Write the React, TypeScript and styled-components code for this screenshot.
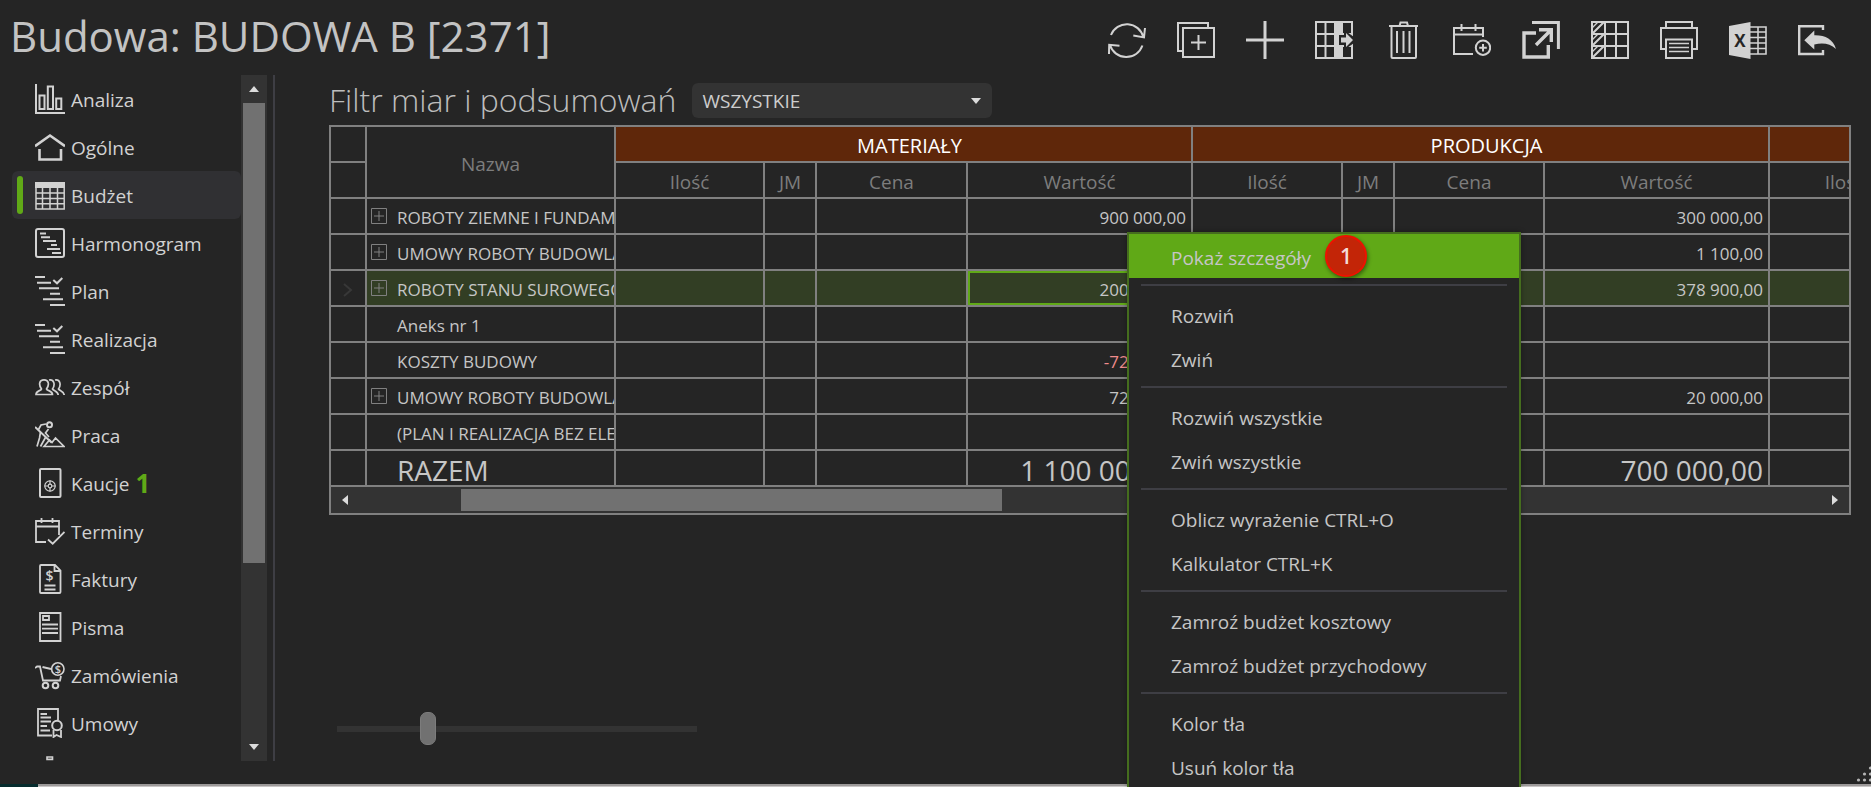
import React from "react";
import styled, { createGlobalStyle } from "styled-components";

const font = `"Open Sans", "Noto Sans", sans-serif`;
const c = {
  bg: "#252525",
  panel: "#333333",
  thumb: "#717171",
  line: "#808080",
  muted: "#7d7d7d",
  text: "#cdcdcd",
  divider: "#3e3e44",
  green: "#60a917",
  rowGreen: "#323e24",
  brown: "#5f270a",
};

const GlobalStyle = createGlobalStyle`
  *, *::before, *::after { box-sizing: border-box; }
  body { margin: 0; background: ${c.bg}; font-family: ${font}; color: ${c.text}; overflow: hidden; }
  button, select, input { font: inherit; color: inherit; margin: 0; }
  button { background: none; border: 0; padding: 0; cursor: pointer; }
`;

const Window = styled.div`
  position: relative;
  display: flex;
  flex-direction: column;
  height: 100vh;
  overflow: hidden;
  background: ${c.bg};
`;

const Header = styled.header`
  display: flex;
  justify-content: space-between;
  align-items: flex-start;
  height: 75px;
  flex: none;
  padding: 0 35px 0 10px;
`;

const Title = styled.h1`
  margin: 0;
  padding-top: 5px;
  font-size: 42px;
  line-height: 62px;
  font-weight: 400;
  color: #c3c3c3;
  white-space: nowrap;
`;

const Toolbar = styled.div`
  display: flex;
  gap: 31px;
  padding-top: 21px;
`;

const ToolButton = styled.button`
  display: block;
  width: 38px;
  height: 38px;
`;

const Icon = styled.svg<{ $size: number }>`
  display: block;
  flex: none;
  width: ${(p) => p.$size}px;
  height: ${(p) => p.$size}px;
  fill: none;
  stroke: #d2d2d2;
  stroke-width: 2;
  .solid { fill: #d2d2d2; stroke: none; }
  .halo { fill: ${c.bg}; stroke: none; }
  .thick { stroke-width: 3; }
  text { stroke: none; fill: #d2d2d2; font-family: ${font}; font-weight: 600; text-anchor: middle; }
  text.dark { fill: ${c.bg}; font-weight: 700; }
`;

const Body = styled.div`
  display: flex;
  flex: 1;
  min-height: 0;
`;

const Sidebar = styled.aside`
  display: flex;
  width: 275px;
  flex: none;
  margin-bottom: 23px;
  padding-left: 12px;
  border-right: 2px solid ${c.divider};
`;

const NavList = styled.nav`
  flex: 1;
  overflow: hidden;
`;

const NavItem = styled.a<{ $active?: boolean }>`
  display: flex;
  align-items: center;
  gap: 6px;
  height: 48px;
  padding-left: ${(p) => (p.$active ? 5 : 23)}px;
  border-radius: 6px;
  background: ${(p) => (p.$active ? "#303033" : "transparent")};
  font-size: 19px;
  line-height: 26px;
  color: #d2d2d2;
  text-decoration: none;
`;

const NavLabel = styled.span`
  padding-top: 2px;
`;

const ActiveMark = styled.span`
  width: 6px;
  height: 38px;
  margin-right: 6px;
  border-radius: 3px;
  background: ${c.green};
`;

const Count = styled.b`
  font-size: 26px;
  line-height: 30px;
  font-weight: 700;
  color: ${c.green};
`;

const VScroll = styled.div`
  display: flex;
  flex-direction: column;
  width: 26px;
  margin-right: 6px;
  padding: 0 2px;
  background: ${c.panel};
`;

const ArrowButton = styled.button`
  display: flex;
  align-items: center;
  justify-content: center;
  width: 28px;
  height: 28px;
  flex: none;
`;

const VArrowButton = styled(ArrowButton)`
  width: 22px;
`;

const VTrack = styled.div`
  flex: 1;
`;

const VThumb = styled.div`
  height: 73%;
  background: ${c.thumb};
`;

const Arrow = styled.svg`
  display: block;
  fill: #dcdcdc;
`;

const Main = styled.main`
  position: relative;
  display: flex;
  flex-direction: column;
  flex: 1;
  min-width: 0;
  padding: 0 20px 0 54px;
`;

const FilterRow = styled.div`
  display: flex;
  align-items: center;
  gap: 16px;
  height: 50px;
  flex: none;
`;

const FilterLabel = styled.label`
  font-size: 32px;
  line-height: 44px;
  font-weight: 300;
  color: #bdbdbd;
  white-space: nowrap;
`;

const SelectBox = styled.div`
  position: relative;
  width: 300px;
  height: 35px;
`;

const Select = styled.select`
  appearance: none;
  width: 100%;
  height: 100%;
  padding: 1px 30px 0 10px;
  border: 0;
  border-radius: 6px;
  background: ${c.panel};
  font-size: 19px;
`;

const SelectArrow = styled(Arrow)`
  position: absolute;
  right: 11px;
  top: 15px;
  pointer-events: none;
`;

const GridFrame = styled.div`
  flex: none;
  border: 2px solid ${c.line};
`;

const GridViewport = styled.div`
  overflow: hidden;
`;

const Table = styled.table`
  table-layout: fixed;
  width: 1590px;
  border-collapse: separate;
  border-spacing: 0;
`;

const Th = styled.th<{ $group?: boolean }>`
  height: 36px;
  padding: ${(p) => (p.$group ? "4px 0 0 12px" : "4px 0 0")};
  border: solid ${c.line};
  border-width: 0 2px 2px 0;
  background: ${(p) => (p.$group ? c.brown : "transparent")};
  font-size: ${(p) => (p.$group ? 20 : 19)}px;
  line-height: 28px;
  font-weight: 400;
  color: ${(p) => (p.$group ? "#ffffff" : c.muted)};
`;

const Tr = styled.tr<{ $selected?: boolean }>`
  td + td { background: ${(p) => (p.$selected ? c.rowGreen : "transparent")}; }
`;

const Td = styled.td<{ $focus?: boolean; $negative?: boolean; $total?: boolean }>`
  height: 36px;
  padding: 4px 5px 0;
  border: solid ${c.line};
  border-width: 0 2px 2px 0;
  overflow: hidden;
  white-space: nowrap;
  text-align: right;
  font-size: ${(p) => (p.$total ? 28 : 17)}px;
  line-height: 30px;
  color: ${(p) => (p.$negative ? "#f08c8c" : "#c6c6c6")};
  box-shadow: ${(p) => (p.$focus ? `inset 0 0 0 2px ${c.green}` : "none")};
`;

const NameCell = styled(Td)`
  padding: 4px 0 0 4px;
  text-align: left;
`;

const NameInner = styled.div<{ $leaf?: boolean }>`
  display: flex;
  align-items: center;
  gap: 10px;
  padding-left: ${(p) => (p.$leaf ? 26 : 0)}px;
`;

const ExpandButton = styled.button`
  width: 16px;
  height: 20px;
  flex: none;
  svg { display: block; margin-bottom: 4px; }
`;

const Marker = styled.svg`
  display: block;
  margin: 0 auto;
  fill: none;
  stroke: #383838;
  stroke-width: 2;
`;

const HScroll = styled.div`
  display: flex;
  align-items: center;
  height: 26px;
  background: ${c.panel};
`;

const HTrack = styled.div`
  flex: 1;
  height: 22px;
`;

const HThumb = styled.div`
  width: 37%;
  height: 22px;
  margin-left: 7%;
  background: ${c.thumb};
`;

const ZoomSlider = styled.input`
  appearance: none;
  width: 360px;
  height: 33px;
  margin: auto 0 39px 8px;
  background: linear-gradient(${c.panel}, ${c.panel}) center / 100% 6px no-repeat;
  &::-webkit-slider-thumb {
    appearance: none;
    width: 16px;
    height: 33px;
    border: 1px solid #7c7c7c;
    border-radius: 7px;
    background: ${c.thumb};
  }
`;

const Menu = styled.div`
  position: absolute;
  left: 1127px;
  top: 232px;
  bottom: 0;
  width: 394px;
  overflow: hidden;
  border: 2px solid #456d1e;
  border-bottom: 0;
  background: ${c.bg};
  box-shadow: 0 0 5px rgba(0, 0, 0, 0.35);
`;

const MenuItem = styled.button<{ $active?: boolean }>`
  display: flex;
  align-items: center;
  gap: 14px;
  width: 100%;
  height: 44px;
  padding: 3px 0 0 42px;
  background: ${(p) => (p.$active ? c.green : "transparent")};
  font-size: 19px;
  line-height: 26px;
  color: #c6c6c6;
  white-space: nowrap;
`;

const MenuLine = styled.hr`
  height: 2px;
  margin: 6px 12px;
  border: 0;
  background: ${c.divider};
`;

const Step = styled.span`
  display: flex;
  align-items: center;
  justify-content: center;
  width: 42px;
  height: 42px;
  margin-bottom: 3px;
  border: 2px solid #ee1200;
  border-radius: 50%;
  background: #c32507;
  box-shadow: 1px 2px 4px rgba(0, 0, 0, 0.45);
  font-size: 21px;
  line-height: 24px;
  font-weight: 600;
  color: #f3dcd8;
`;

const BottomEdge = styled.footer`
  flex: none;
  height: 3px;
  border-left: 38px solid #062b2d;
  background: linear-gradient(#9c9999 0 2px, #c9c6c6 2px);
`;

const Grip = styled.svg`
  position: absolute;
  right: 0;
  bottom: 0;
  fill: #b4b4b4;
`;

const toolIcons: [string, React.ReactNode][] = [
  ["Odśwież", <><path d="M3 14A17 17 0 0 1 35.300 16M25.300 14.500 36 16.400 37 7M34.400 24.500A17 17 0 0 1 2 24M11.500 24.800 1.200 23.800 1 33" /></>],
  ["Dodaj kopię", <><path d="M6 30H1V2H31V7M21.500 14V29M14 21.500H29" /><path d="M6 7H37V36H6Z" /></>],
  ["Dodaj", <path className="thick" d="M19 0V38M0 19H38" />],
  ["Kolumny", <><path d="M1 1H37V37H1ZM10.500 1V37M1 13H20M1 25H20" /><path className="solid" d="M19 1H28V37H19Z" /><path d="M28 13H37M28 25H37" /><path className="halo" d="M24 14H29V9L39 16V22L29 29V24H24Z" /><path className="solid" d="M26 16.500H31V12L38 19 31 26V21.500H26Z" /></>],
  ["Usuń", <><path d="M5 5H34M15.500 5 16.500 1.500H23L24 5M7.500 5V36Q7.500 37 8.500 37H31Q32 37 32 36V5M13 10V32M19.500 10V32M25.500 10V32" /></>],
  ["Dodaj termin", <><path d="M20 33H1V7H30V16M1 13.500H30M8.500 3V10M22.500 3V10" /><circle cx="30" cy="26.700" r="7.200" /><path d="M30 23V30.500M26.200 26.700H33.800" /></>],
  ["Otwórz", <><path strokeWidth="3" d="M10 1.600H36.400V28" /><path strokeWidth="3.400" d="M14 12H2V36H26.300V24M17 8.700H29.300V21M14 24 29 9" /></>],
  ["Siatka", <><path d="M1 1H37V37H1ZM14 1V37M25 1V37M1 13H37M1 25H37" /><path d="M2 12 13 1M2 24 13 13M2 36 13 25" /><path strokeWidth="1.400" d="M1 7 7 1M1 19 7 13M1 31 7 25" /></>],
  ["Drukuj", <><path d="M6 6V1H32V6M5 28H1V7H37V28H33M6 18.500H32V37H6Z" /><path strokeWidth="1.400" d="M9 22.500H29M9 26.500H29M9 30.500H29" /></>],
  ["Eksport do Excela", <><path className="solid" d="M0 5 21.500 1V38L0 34Z" /><path strokeWidth="1.600" d="M21 6H37V33H21M29 6V33M21 11H37M21 16.500H37M21 22H37M21 27.500H37" /><text className="dark" x="11" y="25.500" fontSize="17">X</text></>],
  ["Powrót", <><path strokeWidth="2.400" d="M25 9V5.200H1.200V33H25V29" /><path className="solid" d="M6.300 19.300 16.300 9.500V14.300C27 14 35 18 38 28 32 22.500 25 21.500 16.300 23.500V28.500Z" /></>],
];

const planIcon = <path d="M0 1H10M2 6.700H16M4 12.300H24M15 17.700H25M8 23.300H28M15 29H30M18.300 4 22 7.300 27.300 2" />;

const navItems: { label: string; icon: React.ReactNode; active?: boolean; count?: number }[] = [
  { label: "Analiza", icon: <path d="M1 0V29H30M4.500 11.500H9.500V25H4.500ZM12.800 2.500H18V25H12.800ZM21.200 14.500H26.300V25H21.200Z" /> },
  { label: "Ogólne", icon: <><path strokeWidth="2.600" d="M0 14.200 15 3.500 30 14.200" /><path strokeWidth="2.600" d="M4.500 17V27.500H26V17" /></> },
  { label: "Budżet", active: true, icon: <><path strokeWidth="1.500" d="M1 2.700H29.200V29H1ZM7.500 8V29M15 8V29M22.500 8V29M1 13H29M1 18.500H29M1 23.700H29" /><path className="solid" d="M0 2H30V8H0Z" /></> },
  { label: "Harmonogram", icon: <><rect x="1" y="1" width="28" height="28" rx="2" /><path d="M5 5.500H11M6 9.300H15M8 13H21M16 17H22M12 21H25M17 25H26" /></> },
  { label: "Plan", icon: planIcon },
  { label: "Realizacja", icon: planIcon },
  { label: "Zespół", icon: <path strokeWidth="1.700" d="M1 22.500C1 18.500 6 19 6.500 17 3.500 13 4 7.800 9 7.800S14.500 13 11.500 17C12 19 17.500 18.500 17.500 22.500ZM14 8C19 7 20.500 12.500 17.500 17 18.500 19 23 19 23.200 23M20 8C25 7 26.500 12.500 23.500 17 24.500 19 29 19 29.200 23" /> },
  { label: "Praca", icon: <><circle cx="14.500" cy="4.800" r="2.500" /><path d="M0 7 16.500 22.500" /><path strokeWidth="1.700" d="M3.500 9.500 6 5 11 4M13.500 9 10.500 13 14 17M5.500 12 4.500 18 2 26.500M10.500 17.500 8.500 21 5.500 26.500M9 26.500 14.500 20 17 22.500 20.500 18 29 26.500Z" /></> },
  { label: "Kaucje", count: 1, icon: <><rect x="5" y="1" width="20.500" height="28" rx="1" /><circle cx="15" cy="18" r="5.200" strokeWidth="1.200" /><circle cx="15" cy="18" r="1.800" strokeWidth="1.200" /><path strokeWidth="1.200" d="M9.500 18H13M17 18H20.500M15 12.500V16M15 20V23.500" /></> },
  { label: "Terminy", icon: <path strokeWidth="1.800" d="M11 26H1V5H24V19M1 10.500H24M6.500 2V7M17.500 2V7M13 23.500 17.700 27.700 29.500 16" /> },
  { label: "Faktury", icon: <><path strokeWidth="1.800" d="M20 1H6Q5 1 5 2V28Q5 29 6 29H24.500Q25.500 29 25.500 28V6.500ZM19.500 1V7H25.500M9.500 21.500H20.500M9.500 25.500H20.500" /><text x="14.500" y="17" fontSize="14">$</text></> },
  { label: "Pisma", icon: <path strokeWidth="1.800" d="M5 1H25.500V29H5ZM8 4H14V8H8ZM7 12.500H23M7 16.700H23M7 21H23" /> },
  { label: "Zamówienia", icon: <><path strokeWidth="1.800" d="M0 8 2 6.500H5L8 20.500H25L26 16M7.500 7 16 9" /><circle cx="22.800" cy="9" r="6.200" strokeWidth="1.600" /><circle cx="10.500" cy="25.500" r="2.800" /><circle cx="20.500" cy="25.500" r="2.800" /><text x="22.800" y="13" fontSize="11">$</text></> },
  { label: "Umowy", icon: <><path strokeWidth="1.800" d="M17 27.500H3V1H23V12M5.500 6H12M5.500 9.500H16M5.500 13.500H16M5.500 18H12M5.500 22.500H15" /><circle cx="22" cy="17.500" r="4.800" /><path strokeWidth="1.800" d="M18.500 22V29L21.500 27 26 29V22" /></> },
  { label: "", icon: <path strokeWidth="1.600" d="M12 1H17.500V3.400H12Z" /> },
];

type Row = { name: string; expandable?: boolean; selected?: boolean; total?: boolean; material?: string; production?: string };
const rows: Row[] = [
  { name: "ROBOTY ZIEMNE I FUNDAMENTY", expandable: true, material: "900 000,00", production: "300 000,00" },
  { name: "UMOWY ROBOTY BUDOWLANE", expandable: true, production: "1 100,00" },
  { name: "ROBOTY STANU SUROWEGO", expandable: true, selected: true, material: "200 000,00", production: "378 900,00" },
  { name: "Aneks nr 1" },
  { name: "KOSZTY BUDOWY", material: "-72 000,00" },
  { name: "UMOWY ROBOTY BUDOWLANE", expandable: true, material: "72 000,00", production: "20 000,00" },
  { name: "(PLAN I REALIZACJA BEZ ELEMENTU)" },
  { name: "RAZEM", total: true, material: "1 100 000,00", production: "700 000,00" },
];

const columnWidths = [36, 249, 149, 52, 151, 225, 150, 52, 150, 225, 151];
const measures = ["Ilość", "JM", "Cena", "Wartość"];

const menuGroups = [
  ["Pokaż szczegóły"],
  ["Rozwiń", "Zwiń"],
  ["Rozwiń wszystkie", "Zwiń wszystkie"],
  ["Oblicz wyrażenie CTRL+O", "Kalkulator CTRL+K"],
  ["Zamroź budżet kosztowy", "Zamroź budżet przychodowy"],
  ["Kolor tła", "Usuń kolor tła"],
];

const arrowShapes = {
  up: ["0 0 10 6", 10, 6, "M0 6 5 0 10 6Z"],
  down: ["0 0 10 6", 10, 6, "M0 0 5 6 10 0Z"],
  left: ["0 0 6 10", 6, 10, "M6 0 0 5 6 10Z"],
  right: ["0 0 6 10", 6, 10, "M0 0 6 5 0 10Z"],
} as const;

function ArrowIcon({ dir }: { dir: keyof typeof arrowShapes }) {
  const [viewBox, width, height, d] = arrowShapes[dir];
  return (
    <Arrow viewBox={viewBox} width={width} height={height}>
      <path d={d} />
    </Arrow>
  );
}

function BudgetRow({ row }: { row: Row }) {
  const { total, selected } = row;
  return (
    <Tr $selected={selected}>
      <Td>
        {selected && (
          <Marker width="12" height="14" viewBox="0 0 12 14">
            <path d="M2 1 9 7 2 13" />
          </Marker>
        )}
      </Td>
      <NameCell $total={total}>
        <NameInner $leaf={!row.expandable}>
          {row.expandable && (
            <ExpandButton aria-label="Rozwiń wiersz">
              <svg width="16" height="16" viewBox="0 0 16 16" fill="none" stroke={c.line} strokeWidth="1">
                <path d="M0.500 0.500H15.500V15.500H0.500ZM8 3V13M3 8H13" />
              </svg>
            </ExpandButton>
          )}
          {row.name}
        </NameInner>
      </NameCell>
      <Td /><Td /><Td />
      <Td $total={total} $focus={selected} $negative={row.material?.startsWith("-")}>{row.material}</Td>
      <Td /><Td /><Td />
      <Td $total={total}>{row.production}</Td>
      <Td />
    </Tr>
  );
}

export default function App() {
  return (
    <Window>
      <GlobalStyle />
      <Header>
        <Title>Budowa: BUDOWA B [2371]</Title>
        <Toolbar>
          {toolIcons.map(([label, drawing]) => (
            <ToolButton key={label} aria-label={label}>
              <Icon $size={38} viewBox="0 0 38 38">{drawing}</Icon>
            </ToolButton>
          ))}
        </Toolbar>
      </Header>

      <Body>
        <Sidebar>
          <NavList>
            {navItems.map((item) => (
              <NavItem key={item.label} href="#" $active={item.active}>
                {item.active && <ActiveMark />}
                <Icon $size={30} viewBox="0 0 30 30">{item.icon}</Icon>
                <NavLabel>{item.label}</NavLabel>
                {item.count && <Count>{item.count}</Count>}
              </NavItem>
            ))}
          </NavList>
          <VScroll>
            <VArrowButton aria-label="Przewiń w górę"><ArrowIcon dir="up" /></VArrowButton>
            <VTrack><VThumb /></VTrack>
            <VArrowButton aria-label="Przewiń w dół"><ArrowIcon dir="down" /></VArrowButton>
          </VScroll>
        </Sidebar>

        <Main>
          <FilterRow>
            <FilterLabel htmlFor="filter">Filtr miar i podsumowań</FilterLabel>
            <SelectBox>
              <Select id="filter" defaultValue="all">
                <option value="all">WSZYSTKIE</option>
              </Select>
              <SelectArrow viewBox="0 0 10 6" width="10" height="6">
                <path d="M0 0 5 6 10 0Z" />
              </SelectArrow>
            </SelectBox>
          </FilterRow>

          <GridFrame>
            <GridViewport>
              <Table>
                <colgroup>
                  {columnWidths.map((w, i) => <col key={i} width={w} />)}
                </colgroup>
                <thead>
                  <tr>
                    <Th />
                    <Th rowSpan={2}>Nazwa</Th>
                    <Th $group colSpan={4}>MATERIAŁY</Th>
                    <Th $group colSpan={4}>PRODUKCJA</Th>
                    <Th $group />
                  </tr>
                  <tr>
                    <Th />
                    {measures.map((m) => <Th key={m}>{m}</Th>)}
                    {measures.map((m) => <Th key={m}>{m}</Th>)}
                    <Th>Ilość</Th>
                  </tr>
                </thead>
                <tbody>
                  {rows.map((row, i) => <BudgetRow key={i} row={row} />)}
                </tbody>
              </Table>
            </GridViewport>
            <HScroll>
              <ArrowButton aria-label="Przewiń w lewo"><ArrowIcon dir="left" /></ArrowButton>
              <HTrack><HThumb /></HTrack>
              <ArrowButton aria-label="Przewiń w prawo"><ArrowIcon dir="right" /></ArrowButton>
            </HScroll>
          </GridFrame>

          <ZoomSlider type="range" min={0} max={100} defaultValue={24} aria-label="Powiększenie" />
        </Main>
      </Body>

      <BottomEdge />
      <Grip width="16" height="22" viewBox="0 0 16 22">
        <circle cx="3.500" cy="15" r="1.600" />
        <circle cx="9.500" cy="15" r="1.600" />
        <circle cx="9.500" cy="9" r="1.600" />
        <circle cx="15.500" cy="15" r="1.600" />
        <circle cx="15.500" cy="9" r="1.600" />
        <circle cx="15.500" cy="3" r="1.600" />
      </Grip>

      <Menu>
        {menuGroups.map((group, i) => (
          <React.Fragment key={i}>
            {i > 0 && <MenuLine />}
            {group.map((label) => (
              <MenuItem key={label} $active={i === 0}>
                {label}
                {i === 0 && <Step>1</Step>}
              </MenuItem>
            ))}
          </React.Fragment>
        ))}
      </Menu>
    </Window>
  );
}
